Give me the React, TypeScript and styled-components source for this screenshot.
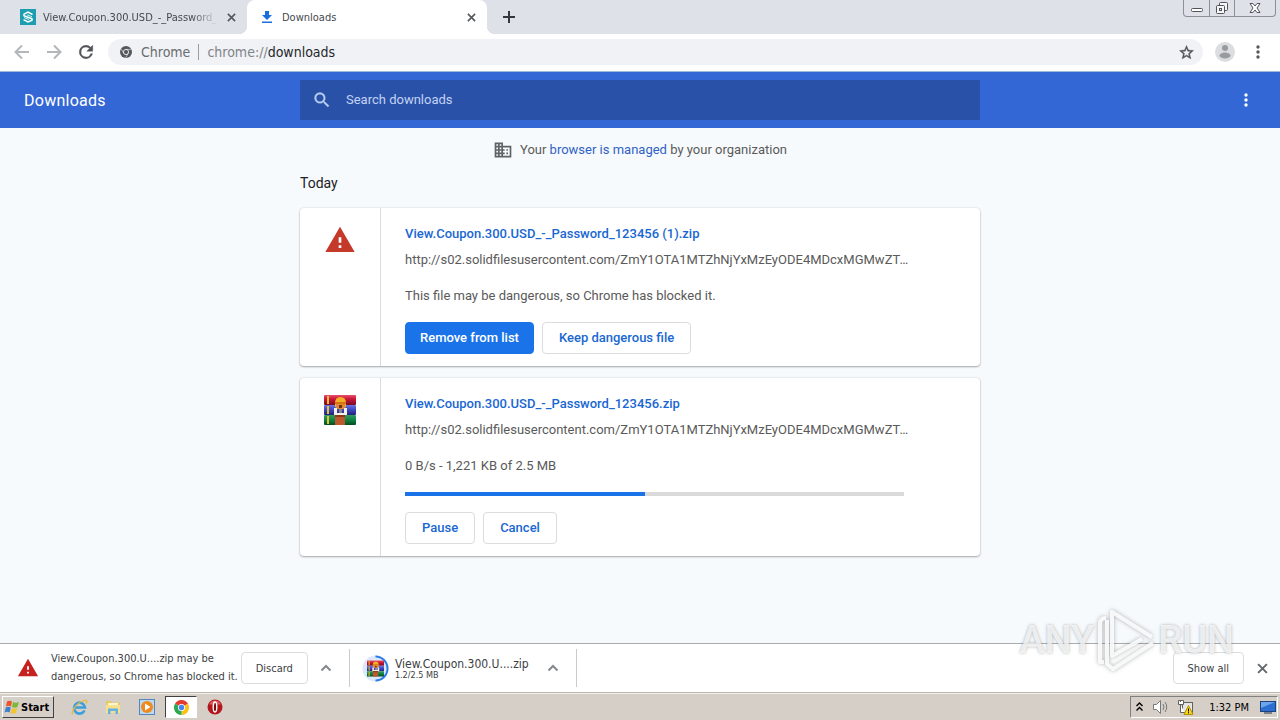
import React from "react";
import styled, { createGlobalStyle } from "styled-components";

const UI_FONT = `"DejaVu Sans Condensed", "DejaVu Sans", sans-serif`;
const PAGE_FONT = `Roboto, "Liberation Sans", sans-serif`;

const GlobalStyle = createGlobalStyle`
  * { box-sizing: border-box; }
  body { margin: 0; font-family: ${PAGE_FONT}; font-size: 13px; color: #5a5a5a; }
  button { font: inherit; color: inherit; padding: 0; border: 0; background: none; cursor: pointer; }
  a { color: inherit; text-decoration: none; }
  svg { display: block; flex: none; }
  p, h1, h2 { margin: 0; font-weight: 400; }
`;

const Screen = styled.div`
  position: relative;
  display: flex;
  flex-direction: column;
  min-height: 100vh;
  background: #f7fafd;
`;

/* ---------- tab strip ---------- */

const TabStrip = styled.header`
  display: flex;
  height: 34px;
  background: #dee1e7;
  font-family: ${UI_FONT};
  font-size: 11px;
  color: #45494d;
`;

const Tab = styled.div<{ $active?: boolean }>`
  position: relative;
  display: flex;
  align-items: center;
  width: ${(p) => (p.$active ? 240 : 247)}px;
  padding: 0 11px 0 ${(p) => (p.$active ? 12 : 20)}px;
  background: ${(p) => (p.$active ? "#fff" : "transparent")};
  border-radius: 8px 8px 0 0;

  &::before,
  &::after {
    content: "";
    display: ${(p) => (p.$active ? "block" : "none")};
    position: absolute;
    bottom: 0;
    width: 8px;
    height: 8px;
  }
  &::before { left: -8px; background: radial-gradient(circle at 0 0, transparent 8px, #fff 8px); }
  &::after { right: -8px; background: radial-gradient(circle at 100% 0, transparent 8px, #fff 8px); }
`;

const TabTitle = styled.span<{ $fade?: boolean }>`
  flex: 1;
  min-width: 0;
  margin: 0 8px 0 7px;
  overflow: hidden;
  white-space: nowrap;
  mask-image: ${(p) => (p.$fade ? "linear-gradient(to right, #000 85%, transparent)" : "none")};
`;

const IconButton = styled.button<{ $size?: number }>`
  display: flex;
  flex: none;
  align-items: center;
  justify-content: center;
  width: ${(p) => p.$size ?? 16}px;
  height: ${(p) => p.$size ?? 16}px;
`;

const NewTab = styled(IconButton)`
  align-self: center;
  margin-left: 11px;
`;

const WindowControls = styled.div`
  display: flex;
  height: 17px;
  margin: 0 4px 0 auto;
  border: 1px solid #8b9097;
  border-top: 0;
  border-radius: 0 0 4px 4px;
`;

const WindowButton = styled.button<{ $wide?: boolean }>`
  display: flex;
  align-items: center;
  justify-content: center;
  width: ${(p) => (p.$wide ? 41 : 25)}px;
  & + & { border-left: 1px solid #8b9097; }
`;

/* ---------- toolbar ---------- */

const Toolbar = styled.nav`
  display: flex;
  align-items: center;
  height: 38px;
  padding: 0 11px 1px 12px;
  background: #fff;
  border-bottom: 1px solid #9dbbd8;
`;

const NavButtons = styled.div`
  display: flex;
  gap: 12px;
`;

const Omnibox = styled.div`
  display: flex;
  flex: 1;
  align-items: center;
  height: 26px;
  margin: 0 12px;
  padding: 0 7px 0 12px;
  border-radius: 13px;
  background: #f0f2f5;
  font-family: ${UI_FONT};
  font-size: 14px;
  color: #696d71;
`;

const Origin = styled.span`
  margin-left: 9px;
  padding-right: 8px;
  border-right: 1px solid #9a9da1;
  line-height: 16px;
`;

const Address = styled.span`
  flex: 1;
  padding-left: 8px;
  line-height: 16px;
  color: #808488;
  b { font-weight: 400; color: #25282b; }
`;

const ToolbarEnd = styled.div`
  display: flex;
  align-items: center;
  gap: 12px;
`;

/* ---------- downloads page ---------- */

const PageHeader = styled.div`
  display: grid;
  grid-template-columns: 1fr minmax(0, 680px) 1fr;
  align-items: center;
  height: 56px;
  padding: 0 24px;
  background: #3367d6;
  color: #fff;
`;

const PageTitle = styled.h1`
  font-size: 16px;
  letter-spacing: 0.25px;
`;

const SearchBox = styled.label`
  display: flex;
  align-items: center;
  gap: 14px;
  height: 40px;
  padding: 0 12px;
  background: #2951a8;
  color: #b9cdf3;
`;

const SearchInput = styled.input`
  flex: 1;
  min-width: 0;
  padding: 0;
  border: 0;
  outline: 0;
  background: none;
  font: 13px/20px ${PAGE_FONT};
  color: #fff;
  &::placeholder { color: #c3d3f3; opacity: 1; }
`;

const HeaderMenu = styled(IconButton)`
  justify-self: end;
`;

const Main = styled.main`
  flex: 1;
  width: 100%;
  max-width: 680px;
  margin: 0 auto;
  padding-bottom: 24px;
`;

const ManagedNote = styled.p`
  display: flex;
  align-items: center;
  justify-content: center;
  gap: 7px;
  height: 44px;
  span { padding-bottom: 2px; }
  a { color: #2f62c4; }
`;

const DateHeading = styled.h2`
  margin-bottom: 14px;
  font-size: 14px;
  line-height: 22px;
  color: #202124;
`;

const Card = styled.article`
  display: flex;
  margin-bottom: 12px;
  border-radius: 4px;
  background: #fff;
  box-shadow: 0 1px 2px rgba(60, 64, 67, 0.4), 0 0 2px rgba(60, 64, 67, 0.2);
`;

const CardIcon = styled.div`
  display: flex;
  justify-content: center;
  width: 81px;
  padding-top: 16px;
  border-right: 1px solid #dadce0;
`;

const CardBody = styled.div`
  flex: 1;
  min-width: 0;
  padding: 17px 68px 12px 24px;
  line-height: 18px;
`;

const FileLink = styled.a`
  display: block;
  font-weight: 500;
  color: #1967d2;
`;

const SourceLink = styled.a`
  display: block;
  margin-top: 8px;
  overflow: hidden;
  white-space: nowrap;
  text-overflow: ellipsis;
`;

const Status = styled.p`
  margin-top: 18px;
`;

const Progress = styled.div`
  height: 4px;
  margin: 17px 8px -1px 0;
  background: #dadada;
`;

const ProgressBar = styled.div`
  height: 4px;
  background: #1a73e8;
`;

const Actions = styled.div`
  display: flex;
  gap: 8px;
  margin-top: 17px;
`;

const ActionButton = styled.button<{ $primary?: boolean }>`
  height: 32px;
  padding: 0 ${(p) => (p.$primary ? 14 : 16)}px;
  border: 1px solid ${(p) => (p.$primary ? "#1a73e8" : "#dadce0")};
  border-radius: 4px;
  background: ${(p) => (p.$primary ? "#1a73e8" : "#fff")};
  font-weight: 500;
  color: ${(p) => (p.$primary ? "#fff" : "#1967d2")};
`;

/* ---------- download shelf ---------- */

const Shelf = styled.section`
  display: flex;
  align-items: center;
  height: 50px;
  border-top: 1px solid #a9acaf;
  border-bottom: 1px solid #b9b6b0;
  background: #fff;
  font-family: ${UI_FONT};
  font-size: 11px;
  color: #3c4043;
`;

const ShelfItem = styled.div<{ $compact?: boolean }>`
  display: flex;
  align-items: center;
  height: 38px;
  padding: 0 15px 0 ${(p) => (p.$compact ? 12 : 17)}px;
  border-right: 1px solid #c9cbce;
`;

const Warning = styled.p`
  margin: 0 3px 0 12px;
  line-height: 18px;
  white-space: nowrap;
`;

const ShelfButton = styled.button`
  height: 32px;
  padding: 0 14px;
  border: 1px solid #dadce0;
  border-radius: 4px;
  background: #fff;
`;

const ShelfChevron = styled(IconButton)`
  margin-left: 10px;
`;

const ShelfFile = styled.div`
  display: flex;
  flex-direction: column;
  margin: 0 6px 0 6px;
  line-height: 14px;
  font-size: 12px;
  small { font-size: 9px; line-height: 9px; }
`;

const ShelfEnd = styled.div`
  display: flex;
  align-items: center;
  gap: 10px;
  margin: 0 10px 0 auto;
`;

/* ---------- taskbar ---------- */

const Taskbar = styled.footer`
  display: flex;
  align-items: center;
  height: 27px;
  padding: 0 2px;
  background: #d6cfc8;
  border-top: 1px solid #f2efea;
  font-family: ${UI_FONT};
  font-size: 11px;
  color: #000;
`;

const StartButton = styled.button`
  display: flex;
  align-items: center;
  gap: 1px;
  height: 22px;
  padding: 0 4px 0 1px;
  border: 1px solid;
  border-color: #fff #404040 #404040 #fff;
  font-weight: 700;
`;

const QuickLaunch = styled.div`
  display: flex;
  align-items: center;
  gap: 2px;
  margin-left: 9px;
`;

const TaskButton = styled.button<{ $active?: boolean }>`
  display: flex;
  align-items: center;
  justify-content: center;
  width: 32px;
  height: 22px;
  background: ${(p) => (p.$active ? "#fff" : "none")};
  border: 1px solid;
  border-color: ${(p) => (p.$active ? "#404040 #fff #fff #404040" : "transparent")};
`;

const Tray = styled.div`
  display: flex;
  align-items: center;
  gap: 8px;
  height: 22px;
  margin-left: auto;
  padding: 0 1px 0 4px;
  border: 1px solid;
  border-color: #808080 #fff #fff #808080;
`;

const Clock = styled.time`
  margin: 0 3px 0 7px;
`;

/* ---------- watermark ---------- */

const Watermark = styled.div`
  position: absolute;
  right: 46px;
  bottom: 48px;
  display: flex;
  align-items: center;
  pointer-events: none;
  font: 500 38px/64px "Liberation Sans Narrow", Roboto, sans-serif;
  color: rgba(255, 255, 255, 0.75);
  text-shadow: 0 0 3px rgba(90, 95, 100, 0.5);
  svg { margin: 0 2px; filter: drop-shadow(0 0 2px rgba(90, 95, 100, 0.55)); }
`;

/* ---------- drawings ---------- */

const Cross = ({ size = 9, color = "#55595d" }) => (
  <svg width={size} height={size} viewBox="0 0 10 10" stroke={color} strokeWidth="1.8">
    <path d="M1 1l8 8M9 1l-8 8" />
  </svg>
);

const Dots = ({ color }: { color: string }) => (
  <svg width="16" height="16" viewBox="0 0 16 16" fill={color}>
    <circle cx="8" cy="3" r="1.7" />
    <circle cx="8" cy="8" r="1.7" />
    <circle cx="8" cy="13" r="1.7" />
  </svg>
);

const Arrow = ({ flip = false }) => (
  <svg width="20" height="20" viewBox="0 0 20 20" fill="none" stroke="#b4b7ba" strokeWidth="2">
    {flip ? <path d="M3 10h13M10 3.5l6.500 6.500-6.500 6.500" /> : <path d="M17 10H4M10 3.500L3.500 10l6.500 6.500" />}
  </svg>
);

const Chevron = () => (
  <svg width="12" height="8" viewBox="0 0 12 8" fill="none" stroke="#85888c" strokeWidth="2">
    <path d="M1.500 6.500L6 2l4.500 4.500" />
  </svg>
);

const Alert = ({ size, color }: { size: number; color: string }) => (
  <svg width={size} height={size} viewBox="0 0 24 24" fill={color}>
    <path d="M1 21h22L12 2 1 21zm12-3h-2v-2h2v2zm0-4h-2v-4h2v4z" />
  </svg>
);

const Archive = ({ size }: { size: number }) => (
  <svg width={size} height={size} viewBox="0 0 32 32">
    <defs>
      <linearGradient id="bookRed" x2="0" y2="1">
        <stop offset="0" stopColor="#e8506a" /><stop offset=".4" stopColor="#c8163a" /><stop offset="1" stopColor="#7d0a24" />
      </linearGradient>
      <linearGradient id="bookBlue" x2="0" y2="1">
        <stop offset="0" stopColor="#6a76e0" /><stop offset=".45" stopColor="#4048c4" /><stop offset="1" stopColor="#1f2276" />
      </linearGradient>
      <linearGradient id="bookGreen" x2="0" y2="1">
        <stop offset="0" stopColor="#3a9b62" /><stop offset=".5" stopColor="#0e8242" /><stop offset="1" stopColor="#064a24" />
      </linearGradient>
    </defs>
    <rect x="0" y="1" width="32" height="10" rx="1" fill="url(#bookRed)" />
    <rect x="0" y="11" width="32" height="10" rx="1" fill="url(#bookBlue)" />
    <rect x="0" y="21" width="32" height="10" rx="1" fill="url(#bookGreen)" />
    <path d="M3 2h2v8H3zM3 12h2v8H3zM3 22h2v8H3z" fill="#e8c22c" />
    <path d="M11 9q0-6 5.500-6T22 9v4H11z" fill="#f4ae23" />
    <path d="M11 8h11v2H11z" fill="#d87416" />
    <path d="M12 10h9v5h-9z" fill="#e0863a" />
    <path d="M10 14h3v5h2v-4h3v4h2v-5h3v7H10z" fill="#f4f0ea" />
    <path d="M15 11h3v3h-3z" fill="#6e3210" />
    <path d="M15 15h3v4h-3z" fill="#8a8580" />
    <path d="M11 21h10v10H11z" fill="#bd582c" />
    <path d="M11 21h10v2H11z" fill="#8a3817" />
  </svg>
);

const ChromeLogo = () => (
  <svg width="15" height="15" viewBox="0 0 16 16">
    <path d="M8 8L1.070 4A8 8 0 0 1 14.930 4z" fill="#e33b2e" />
    <path d="M8 8L14.930 4A8 8 0 0 1 8 16z" fill="#fbc116" />
    <path d="M8 8L8 16A8 8 0 0 1 1.070 4z" fill="#2da94f" />
    <circle cx="8" cy="8" r="3.800" fill="#fff" />
    <circle cx="8" cy="8" r="2.900" fill="#4285f4" />
  </svg>
);

const ORIGIN_URL = "http://s02.solidfilesusercontent.com/ZmY1OTA1MTZhNjYxMzEyODE4MDcxMGMwZTdkYzVlMzY4";

export default function App() {
  const received = 48;
  return (
    <Screen>
      <GlobalStyle />

      <TabStrip>
        <Tab>
          <svg width="16" height="16" viewBox="0 0 16 16">
            <rect width="16" height="16" fill="#1d9db0" />
            <path d="M12.500 5.500L8 3.200 4 5.200v1.600l8 3v1.500L8 13l-4.500-2.300" fill="none" stroke="#fff" strokeWidth="1.500" />
            <path d="M4 8.500l5 2M7 5.800l5 2" stroke="#d5f1f4" />
          </svg>
          <TabTitle $fade>View.Coupon.300.USD_-_Password_123456</TabTitle>
          <IconButton $size={10} aria-label="Close tab"><Cross /></IconButton>
        </Tab>
        <Tab $active>
          <svg width="16" height="16" viewBox="0 0 16 16" fill="#1a6fe0">
            <path d="M6 2h4v4h3L8 11 3 6h3zM3 12.500h10v1.500H3z" />
          </svg>
          <TabTitle>Downloads</TabTitle>
          <IconButton $size={10} aria-label="Close tab"><Cross /></IconButton>
        </Tab>
        <NewTab $size={22} aria-label="New tab">
          <svg width="12" height="12" viewBox="0 0 12 12" stroke="#33363a" strokeWidth="2">
            <path d="M6 0v12M0 6h12" />
          </svg>
        </NewTab>
        <WindowControls>
          <WindowButton aria-label="Minimize">
            <svg width="14" height="14" viewBox="0 0 14 14" fill="#fff" stroke="#50545a">
              <rect x="1.500" y="7.500" width="11" height="3" rx="1" />
            </svg>
          </WindowButton>
          <WindowButton aria-label="Restore">
            <svg width="14" height="14" viewBox="0 0 14 14" fill="#f4f5f7" stroke="#50545a">
              <rect x="4.500" y="1.500" width="8" height="8" rx="1" />
              <rect x="1.500" y="4.500" width="8" height="8" rx="1" />
              <rect x="4.500" y="7.500" width="2" height="2" />
            </svg>
          </WindowButton>
          <WindowButton $wide aria-label="Close">
            <svg width="12" height="12" viewBox="0 0 12 12" fill="#fff" stroke="#50545a">
              <path d="M1 1.500h3l2 2.500 2-2.500h3L8 6l3 4.500H8L6 8l-2 2.500H1L4 6z" />
            </svg>
          </WindowButton>
        </WindowControls>
      </TabStrip>

      <Toolbar>
        <NavButtons>
          <IconButton $size={20} aria-label="Back"><Arrow /></IconButton>
          <IconButton $size={20} aria-label="Forward"><Arrow flip /></IconButton>
          <IconButton $size={20} aria-label="Reload">
            <svg width="20" height="20" viewBox="0 0 24 24" fill="#505357">
              <path d="M17.650 6.350A7.960 7.960 0 0 0 12 4a8 8 0 1 0 7.730 10h-2.080A6 6 0 1 1 12 6c1.660 0 3.140.69 4.220 1.780L13 11h7V4l-2.350 2.350z" stroke="#505357" strokeWidth=".6" />
            </svg>
          </IconButton>
        </NavButtons>
        <Omnibox>
          <svg width="12" height="12" viewBox="0 0 12 12">
            <circle cx="6" cy="6" r="6" fill="#54575b" />
            <circle cx="6" cy="6" r="2.600" fill="#54575b" stroke="#f0f2f5" strokeWidth=".9" />
            <path d="M6 3.400h5.300M3.700 7.300L1.200 2.900M8.300 7.300L5.600 11.800" stroke="#f0f2f5" strokeWidth=".6" />
          </svg>
          <Origin>Chrome</Origin>
          <Address>chrome://<b>downloads</b></Address>
          <IconButton $size={20} aria-label="Bookmark this page">
            <svg width="17" height="17" viewBox="0 0 24 24" fill="#505357" stroke="#505357" strokeWidth=".5">
              <path d="M22 9.240l-7.190-.62L12 2 9.190 8.630 2 9.240l5.460 4.730L5.820 21 12 17.270 18.180 21l-1.630-7.030L22 9.240zM12 15.400l-3.760 2.270 1-4.280-3.320-2.880 4.380-.38L12 6.100l1.710 4.040 4.380.38-3.320 2.880 1 4.280L12 15.400z" />
            </svg>
          </IconButton>
        </Omnibox>
        <ToolbarEnd>
          <IconButton $size={20} aria-label="Profile">
            <svg width="20" height="20" viewBox="0 0 20 20">
              <circle cx="10" cy="10" r="10" fill="#dcdddf" />
              <circle cx="10" cy="6" r="3" fill="#989b9f" />
              <ellipse cx="10" cy="13.500" rx="5.500" ry="3" fill="#989b9f" />
            </svg>
          </IconButton>
          <IconButton $size={22} aria-label="Chrome menu"><Dots color="#55585c" /></IconButton>
        </ToolbarEnd>
      </Toolbar>

      <PageHeader>
        <PageTitle>Downloads</PageTitle>
        <SearchBox>
          <svg width="20" height="20" viewBox="0 0 24 24" fill="currentColor" stroke="currentColor" strokeWidth=".4">
            <path d="M15.500 14h-.79l-.28-.27A6.470 6.470 0 0 0 16 9.500 6.500 6.500 0 1 0 9.500 16c1.610 0 3.090-.59 4.230-1.570l.27.28v.79l5 4.990L20.490 19l-4.990-5zm-6 0C7.010 14 5 11.990 5 9.500S7.010 5 9.500 5 14 7.010 14 9.500 11.990 14 9.500 14z" />
          </svg>
          <SearchInput type="search" placeholder="Search downloads" aria-label="Search downloads" />
        </SearchBox>
        <HeaderMenu $size={20} aria-label="More actions"><Dots color="#fff" /></HeaderMenu>
      </PageHeader>

      <Main>
        <ManagedNote>
          <svg width="20" height="20" viewBox="0 0 24 24" fill="#5f6368">
            <path d="M12 7V3H2v18h20V7H12zM6 19H4v-2h2v2zm0-4H4v-2h2v2zm0-4H4V9h2v2zm0-4H4V5h2v2zm4 12H8v-2h2v2zm0-4H8v-2h2v2zm0-4H8V9h2v2zm0-4H8V5h2v2zm10 12h-8v-2h2v-2h-2v-2h2v-2h-2V9h8v10zm-2-8h-2v2h2v-2zm0 4h-2v2h2v-2z" />
          </svg>
          <span>Your <a href="#managed">browser is managed</a> by your organization</span>
        </ManagedNote>

        <DateHeading>Today</DateHeading>

        <Card>
          <CardIcon><Alert size={32} color="#c5392b" /></CardIcon>
          <CardBody>
            <FileLink href="#file-1">View.Coupon.300.USD_-_Password_123456 (1).zip</FileLink>
            <SourceLink href="#source-1">{ORIGIN_URL}</SourceLink>
            <Status>This file may be dangerous, so Chrome has blocked it.</Status>
            <Actions>
              <ActionButton $primary>Remove from list</ActionButton>
              <ActionButton>Keep dangerous file</ActionButton>
            </Actions>
          </CardBody>
        </Card>

        <Card>
          <CardIcon><Archive size={32} /></CardIcon>
          <CardBody>
            <FileLink href="#file-2">View.Coupon.300.USD_-_Password_123456.zip</FileLink>
            <SourceLink href="#source-2">{ORIGIN_URL}</SourceLink>
            <Status>0 B/s - 1,221 KB of 2.5 MB</Status>
            <Progress role="progressbar" aria-valuenow={received} aria-label="Download progress">
              <ProgressBar style={{ width: `${received}%` }} />
            </Progress>
            <Actions>
              <ActionButton>Pause</ActionButton>
              <ActionButton>Cancel</ActionButton>
            </Actions>
          </CardBody>
        </Card>
      </Main>

      <Shelf>
        <ShelfItem>
          <Alert size={22} color="#c5221f" />
          <Warning>View.Coupon.300.U....zip may be<br />dangerous, so Chrome has blocked it.</Warning>
          <ShelfButton>Discard</ShelfButton>
          <ShelfChevron aria-label="Options"><Chevron /></ShelfChevron>
        </ShelfItem>
        <ShelfItem $compact>
          <svg width="27" height="27" viewBox="0 0 27 27">
            <circle cx="13.500" cy="13.500" r="13" fill="#dce8fb" />
            <path d="M13.500 1.500a12 12 0 0 1 0 24" fill="none" stroke="#2f7be6" strokeWidth="2" />
            <g transform="translate(5 5)"><Archive size={17} /></g>
          </svg>
          <ShelfFile>View.Coupon.300.U....zip<small>1.2/2.5 MB</small></ShelfFile>
          <ShelfChevron aria-label="Options"><Chevron /></ShelfChevron>
        </ShelfItem>
        <ShelfEnd>
          <ShelfButton>Show all</ShelfButton>
          <IconButton aria-label="Close downloads bar"><Cross size={11} color="#65686c" /></IconButton>
        </ShelfEnd>
      </Shelf>

      <Taskbar>
        <StartButton>
          <svg width="16" height="16" viewBox="0 0 16 16">
            <path d="M3 2.500q2.500-1.500 5 0L7 7.500q-2.500-1.500-5 0z" fill="#e8562a" />
            <path d="M9 3q2.500 1.500 6 0l-1.500 5q-3 1.500-5.500 0z" fill="#7cb83a" />
            <path d="M1.800 8.500q2.500-1.500 5 0l-1.200 5q-2.500-1.500-5 0z" fill="#3c7fd0" />
            <path d="M7.800 9q2.500 1.500 5.500 0l-1.400 5q-3 1.500-5.300 0z" fill="#f4c430" />
          </svg>
          Start
        </StartButton>
        <QuickLaunch>
          <TaskButton aria-label="Internet Explorer">
            <svg width="17" height="17" viewBox="0 0 17 17" fill="none">
              <path d="M13.500 11.500A5.500 5.500 0 1 1 14 8.500H4" stroke="#3a9fdd" strokeWidth="2.600" />
              <path d="M2 15.500C-1 14 5 4 13 1.500c3-.8 3.500 1 2.300 3" stroke="#e9b93a" strokeWidth="1.300" />
            </svg>
          </TaskButton>
          <TaskButton aria-label="Explorer">
            <svg width="16" height="16" viewBox="0 0 16 16">
              <path d="M1 2h5l1 1.500h8V14H1z" fill="#e9c964" />
              <path d="M3 4h10v5H3z" fill="#fdf6cf" />
              <path d="M1 6h14v8H1z" fill="#f6df8d" />
              <path d="M3 15V9.500h10V15h-2.500v-3h-5v3z" fill="#62b3e4" />
            </svg>
          </TaskButton>
          <TaskButton aria-label="Media Player">
            <svg width="16" height="16" viewBox="0 0 16 16">
              <rect x=".5" y=".5" width="15" height="15" fill="#bcd9f2" stroke="#5487bd" />
              <circle cx="8" cy="8" r="6" fill="#f08a1d" />
              <path d="M6 4.500L11.500 8 6 11.500z" fill="#fff" />
            </svg>
          </TaskButton>
          <TaskButton $active aria-label="Chrome"><ChromeLogo /></TaskButton>
          <TaskButton aria-label="Opera">
            <svg width="16" height="16" viewBox="0 0 16 16">
              <circle cx="8" cy="8" r="7.500" fill="#b3161b" />
              <path d="M2 5.500a6.500 6.500 0 0 1 12 0z" fill="#e0595c" />
              <ellipse cx="8" cy="8" rx="1.800" ry="5" fill="#7d0a0e" stroke="#fff" strokeWidth="1.400" />
            </svg>
          </TaskButton>
        </QuickLaunch>
        <Tray>
          <svg width="9" height="10" viewBox="0 0 9 10" fill="none" stroke="#000" strokeWidth="1.400">
            <path d="M1.500 4l3-3 3 3M1.500 8.500l3-3 3 3" />
          </svg>
          <svg width="17" height="16" viewBox="0 0 17 16" fill="none" stroke="#77797c">
            <path d="M1.500 5.500h3l4-4v13l-4-4h-3z" fill="#fff" />
            <path d="M11 5q2 3 0 6M13 3q3.500 5 0 10" />
          </svg>
          <svg width="17" height="17" viewBox="0 0 17 17">
            <rect x="5.500" y="3.500" width="10" height="10" fill="#e5e5e5" stroke="#606060" />
            <path d="M1.500 1.500h5v4h-5zM3.500 5.500v8h4" fill="#fff" stroke="#606060" />
            <path d="M3.500 1v2" stroke="#606060" />
            <path d="M11.500 6.500l4.500 9h-9z" fill="#f7d51d" stroke="#b79300" />
            <path d="M11.500 9.500v3M11.500 13.200v1.200" stroke="#000" />
          </svg>
          <Clock>1:32 PM</Clock>
          <svg width="16" height="16" viewBox="0 0 16 16">
            <rect x=".5" y="2.500" width="15" height="10" fill="#2b6fd0" stroke="#20427c" />
            <path d="M1 3h14L1 9z" fill="#6ba6ee" />
            <path d="M4 14h8" stroke="#5c6773" strokeWidth="1.500" />
          </svg>
        </Tray>
      </Taskbar>

      <Watermark aria-hidden="true">
        ANY
        <svg width="60" height="64" viewBox="0 0 60 64" fill="none" stroke="#fff" strokeOpacity=".85" strokeWidth="4" strokeLinejoin="round">
          <path d="M10 10q-6 0-6 6v38h4" />
          <path d="M56 29L16 4v44l30-17" />
          <path d="M11 12v44l6 5 40-26" />
        </svg>
        RUN
      </Watermark>
    </Screen>
  );
}
